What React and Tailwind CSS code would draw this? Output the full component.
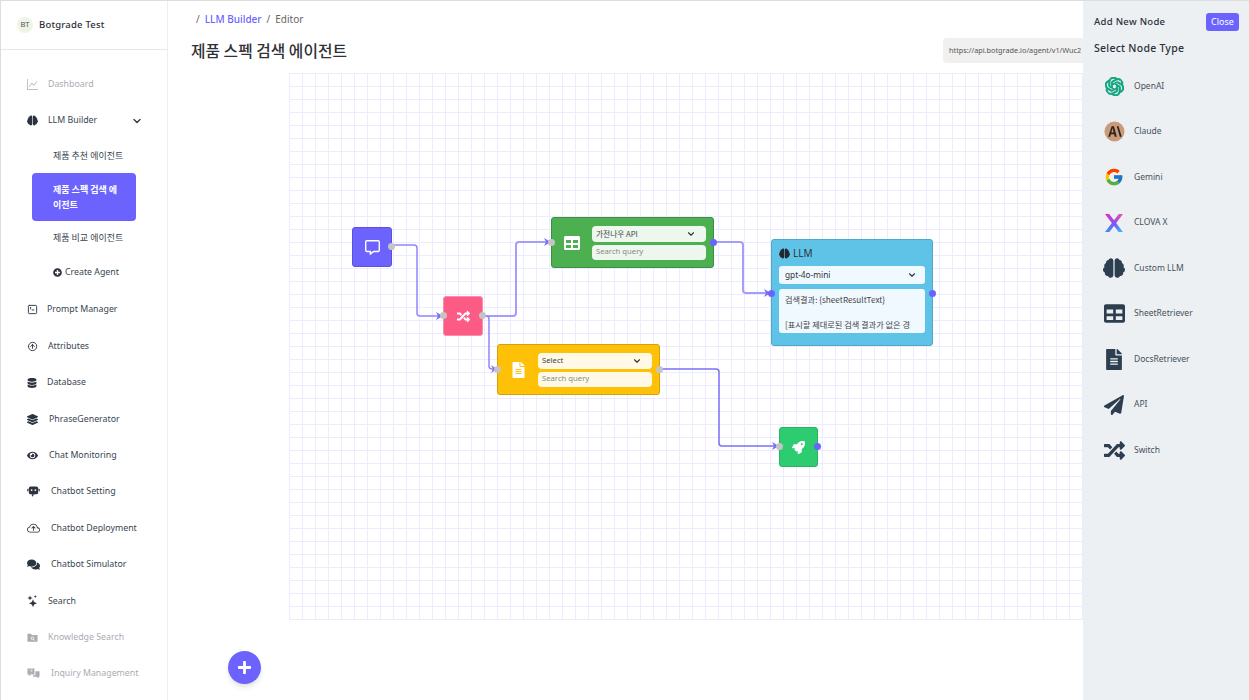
import React from 'react';
import {
  FaBrain, FaTable, FaFileAlt, FaPaperPlane, FaRandom, FaRocket, FaDatabase, FaLayerGroup,
  FaComments, FaPlusCircle, FaPlus, FaEye, FaRegCommentAlt,
} from 'react-icons/fa';
import { SiOpenai } from 'react-icons/si';
import { FcGoogle } from 'react-icons/fc';
import { LuChevronDown, LuSquareTerminal } from 'react-icons/lu';
import { BsGraphUp, BsStars, BsCloudArrowUp } from 'react-icons/bs';
import { TbCircleArrowUp } from 'react-icons/tb';

const sans = "font-['Noto_Sans','Noto_Sans_CJK_KR',sans-serif]";
const kr = "font-['Noto_Sans_CJK_KR','Noto_Sans',sans-serif]";

const ClaudeIcon = () => (
  <svg viewBox="0 0 22 22" className="w-[21px] h-[21px]">
    <circle cx="11" cy="11" r="10.5" fill="#c99b78" />
    <path d="M8 5.5h2.4l3 11h-2.2l-.6-2.6H7.2l-.7 2.6H4.4zM7.7 12h2.4l-1.2-4.6zM13.4 5.5h1.8l3.4 11h-2z" fill="#2b2320" />
  </svg>
);

const ClovaIcon = () => (
  <svg viewBox="0 0 20 20" className="w-[20px] h-[20px]">
    <defs>
      <linearGradient id="cx1" x1="0" y1="0" x2="1" y2="1">
        <stop offset="0" stopColor="#f020c8" />
        <stop offset="0.55" stopColor="#7a5cf0" />
        <stop offset="1" stopColor="#28c8f8" />
      </linearGradient>
      <linearGradient id="cx2" x1="1" y1="0" x2="0" y2="1">
        <stop offset="0" stopColor="#f050a8" />
        <stop offset="0.5" stopColor="#8a50f0" />
        <stop offset="1" stopColor="#2a9cf8" />
      </linearGradient>
    </defs>
    <path d="M1 1h4.2L19 19h-4.4z" fill="url(#cx1)" />
    <path d="M19 1h-4.2L1 19h4.4z" fill="url(#cx2)" />
  </svg>
);

const BotIcon = ({ className }) => (
  <svg viewBox="0 0 14 14" className={className} fill="currentColor">
    <rect x="2" y="1.5" width="10" height="8.5" rx="2" />
    <rect x="0.3" y="4" width="1.2" height="3" rx="0.5" />
    <rect x="12.5" y="4" width="1.2" height="3" rx="0.5" />
    <path d="M5 10h3l-2.4 2.6z" />
    <circle cx="5" cy="5.5" r="1" fill="#fff" />
    <circle cx="9" cy="5.5" r="1" fill="#fff" />
  </svg>
);

const FolderSearchIcon = ({ className }) => (
  <svg viewBox="0 0 12 12" className={className} fill="currentColor">
    <path d="M0.5 2h3.8l1 1.2h6.2v7.3h-11z" />
    <circle cx="6" cy="6.8" r="1.5" fill="none" stroke="#fff" strokeWidth="0.9" />
    <path d="M7 7.8l1.3 1.2" stroke="#fff" strokeWidth="0.9" />
  </svg>
);

const InquiryIcon = ({ className }) => (
  <svg viewBox="0 0 14 14" className={className} fill="currentColor">
    <path d="M0.5 1.5h7.5v6.5H4L2 10V8H0.5z" />
    <path d="M9 4.5h4.5v6H12.4v2l-2-2H6.5V9H9z" />
    <path d="M3.2 3.8c.2-1 2.3-1 2.3.2 0 .8-1.1.8-1.1 1.5" fill="none" stroke="#fff" strokeWidth="0.8" />
    <circle cx="4.4" cy="6.8" r="0.45" fill="#fff" />
  </svg>
);

const navItems = [
  { label: 'Dashboard', icon: BsGraphUp, iconClass: 'w-[11px] h-[11px]', gap: 'gap-[10px]', muted: true },
  { label: 'LLM Builder', icon: FaBrain, iconClass: 'w-[11px] h-[11px]', gap: 'gap-[10px]', chevron: true },
  { sub: '제품 추천 에이전트', h: 'h-[34px]' },
  { active: '제품 스펙 검색 에이전트' },
  { sub: '제품 비교 에이전트', h: 'h-[33px]' },
  { create: 'Create Agent' },
  { label: 'Prompt Manager', icon: LuSquareTerminal, iconClass: 'w-[11px] h-[11px]', gap: 'gap-[9px]' },
  { label: 'Attributes', icon: TbCircleArrowUp, iconClass: 'w-[11px] h-[11px]', gap: 'gap-[10px]' },
  { label: 'Database', icon: FaDatabase, iconClass: 'w-[10px] h-[10px]', gap: 'gap-[10px]' },
  { label: 'PhraseGenerator', icon: FaLayerGroup, iconClass: 'w-[11px] h-[11px]', gap: 'gap-[11px]' },
  { label: 'Chat Monitoring', icon: FaEye, iconClass: 'w-[11px] h-[11px]', gap: 'gap-[11px]' },
  { label: 'Chatbot Setting', icon: BotIcon, iconClass: 'w-[13px] h-[13px]', gap: 'gap-[11px]' },
  { label: 'Chatbot Deployment', icon: BsCloudArrowUp, iconClass: 'w-[13px] h-[13px]', gap: 'gap-[11px]' },
  { label: 'Chatbot Simulator', icon: FaComments, iconClass: 'w-[13px] h-[13px]', gap: 'gap-[11px]' },
  { label: 'Search', icon: BsStars, iconClass: 'w-[12px] h-[12px]', gap: 'gap-[9px]' },
  { label: 'Knowledge Search', icon: FolderSearchIcon, iconClass: 'w-[11px] h-[11px]', gap: 'gap-[10px]', muted: true },
  { label: 'Inquiry Management', icon: InquiryIcon, iconClass: 'w-[13px] h-[13px]', gap: 'gap-[11px]', muted: true },
];

const nodeTypes = [
  { label: 'OpenAI', icon: <SiOpenai stroke="currentColor" strokeWidth={1.2} className="w-[19px] h-[19px] text-[#10a37f]" /> },
  { label: 'Claude', icon: <ClaudeIcon /> },
  { label: 'Gemini', icon: <FcGoogle className="w-[20px] h-[20px]" /> },
  { label: 'CLOVA X', icon: <ClovaIcon /> },
  { label: 'Custom LLM', icon: <FaBrain className="w-[22px] h-[22px] text-[#2c3e50]" /> },
  { label: 'SheetRetriever', icon: <FaTable className="w-[21px] h-[21px] text-[#2c3e50]" /> },
  { label: 'DocsRetriever', icon: <FaFileAlt className="w-[20px] h-[21px] text-[#2c3e50]" /> },
  { label: 'API', icon: <FaPaperPlane className="w-[20px] h-[20px] text-[#2c3e50]" /> },
  { label: 'Switch', icon: <FaRandom className="w-[21px] h-[21px] text-[#2c3e50]" /> },
];

const Sidebar = () => (
  <aside className={`w-[167px] shrink-0 h-full border-r border-[#eeeeee] bg-white ${sans}`}>
    <div className="h-[49px] border-b border-[#e8e8e8] flex items-center pl-[16px] gap-[6px]">
      <div className="w-[16px] h-[16px] rounded-full bg-[#eef4e6] flex items-center justify-center text-[7.5px] text-[#555]">BT</div>
      <span className="text-[9.5px] font-medium text-[#2b2f3a] tracking-[0.2px]">Botgrade Test</span>
    </div>
    <nav className="pt-[16px] flex flex-col">
      {navItems.map((item, i) => {
        if (item.sub) {
          return (
            <div key={i} className={`${item.h} flex items-center pl-[52px] text-[9px] text-[#384551] ${kr}`}>{item.sub}</div>
          );
        }
        if (item.active) {
          return (
            <div key={i} className="pl-[31px]">
              <div className={`w-[104px] h-[48px] rounded-[4px] bg-[#6c63ff] text-white text-[9px] font-bold leading-[15px] pl-[21px] pr-[14px] flex items-center ${kr}`}>
                {item.active}
              </div>
            </div>
          );
        }
        if (item.create) {
          return (
            <div key={i} className="h-[38px] flex items-center pl-[52px] gap-[3px] text-[8.8px] text-[#384551]">
              <FaPlusCircle className="w-[9px] h-[9px] text-[#2c3340]" />
              {item.create}
            </div>
          );
        }
        const Icon = item.icon;
        return (
          <div
            key={i}
            className={`h-[36.4px] flex items-center pl-[26px] pr-[24px] ${item.gap} text-[8.8px] ${item.muted ? 'text-[#a9acb3]' : 'text-[#384551]'}`}
          >
            <Icon className={`${item.iconClass} shrink-0 ${item.muted ? 'text-[#a9acb3]' : 'text-[#2c3340]'}`} />
            <span className="whitespace-nowrap">{item.label}</span>
            {item.chevron && <LuChevronDown strokeWidth={2.6} className="ml-auto w-[12px] h-[12px] text-[#333]" />}
          </div>
        );
      })}
    </nav>
  </aside>
);

const Handle = ({ className }) => (
  <span className={`absolute w-[7px] h-[7px] rounded-full ${className}`} />
);

const Field = ({ children, select, className = '' }) => (
  <div className={`flex items-center justify-between rounded-[4px] bg-white/90 px-[4px] text-[7.7px] ${select ? 'text-[#444]' : 'text-[#8a8a8a]'} ${className}`}>
    <span>{children}</span>
    {select && <LuChevronDown strokeWidth={2.6} className="w-[10px] h-[10px] mr-[6px] text-[#333]" />}
  </div>
);

const Canvas = () => (
  <div className={`relative ml-[121px] h-[547px] w-[900px] bg-[linear-gradient(#eeebff_1px,transparent_1px),linear-gradient(90deg,#eeebff_1px,transparent_1px)] bg-[size:13px_13px] border-b border-[#eeebff] ${sans}`}>
    <svg className="absolute inset-0 w-full h-full" fill="none">
      <g stroke="#8f86ff" strokeWidth="1.5">
        <path d="M103 172 H125 Q128 172 128 175 V240 Q128 243 131 243 H154" />
        <path d="M193 243 H224 Q227 243 227 240 V172 Q227 169 230 169 H262" stroke="#a49cff" strokeWidth="2" />
        <path d="M193 243 H197 Q200 243 200 246 V293 Q200 296 203 296 H208" />
        <path d="M425 169 H451 Q454 169 454 172 V217 Q454 220 457 220 H482" stroke="#a49cff" strokeWidth="2" />
        <path d="M371 296 H427 Q430 296 430 299 V370 Q430 373 433 373 H490" stroke="#7b70f5" />
      </g>
      <g fill="#7b70f5">
        <path d="M147 239 L154 243 L147 247 L149 243 Z" />
        <path d="M255 165 L262 169 L255 173 L257 169 Z" />
        <path d="M202 292 L208 296 L202 300 L204 296 Z" />
        <path d="M475 216 L482 220 L475 224 L477 220 Z" />
        <path d="M483 369 L490 373 L483 377 L485 373 Z" />
      </g>
    </svg>

    {/* chat node */}
    <div className="absolute left-[63px] top-[154px] w-[40px] h-[40px] rounded-[3px] bg-[#6c63ff] border border-[#5a52d8] flex items-center justify-center">
      <FaRegCommentAlt className="w-[15px] h-[15px] text-white" />
      <Handle className="-right-[4px] top-[15px] bg-[#c4c4c4]" />
    </div>

    {/* switch node */}
    <div className="absolute left-[154px] top-[223px] w-[40px] h-[40px] rounded-[3px] bg-[#fb5b85] border border-[#f78fa9] flex items-center justify-center">
      <FaRandom className="w-[13px] h-[13px] text-white" />
      <Handle className="-left-[4px] top-[15px] bg-[#c4c4c4]" />
      <Handle className="-right-[4px] top-[15px] bg-[#c4c4c4]" />
    </div>

    {/* sheet node */}
    <div className="absolute left-[262px] top-[144px] w-[163px] h-[51px] rounded-[3px] bg-[#4caf50] border border-[#3c8f40] flex items-center pl-[12px] pr-[7px] gap-[12px]">
      <FaTable className="w-[16px] h-[16px] text-white shrink-0" />
      <div className="flex-1 flex flex-col gap-[3px]">
        <Field select className={`h-[16px] ${kr}`}>가전나우 API</Field>
        <Field className="h-[15px]">Search query</Field>
      </div>
      <Handle className="-left-[4px] top-[21px] bg-[#c4c4c4]" />
      <Handle className="-right-[4px] top-[21px] bg-[#6c63ff]" />
    </div>

    {/* docs node */}
    <div className="absolute left-[208px] top-[271px] w-[163px] h-[51px] rounded-[3px] bg-[#ffc107] border border-[#d4a20b] flex items-center pl-[14px] pr-[7px] gap-[13px]">
      <FaFileAlt className="w-[13px] h-[16px] text-white shrink-0" />
      <div className="flex-1 flex flex-col gap-[3px]">
        <Field select className="h-[16px]">Select</Field>
        <Field className="h-[15px]">Search query</Field>
      </div>
      <Handle className="-left-[4px] top-[21px] bg-[#c4c4c4]" />
      <Handle className="-right-[4px] top-[21px] bg-[#c4c4c4]" />
    </div>

    {/* llm node */}
    <div className="absolute left-[482px] top-[166px] w-[162px] h-[107px] rounded-[3px] bg-[#5fc3e8] border border-[#4fa8cc] px-[7px] pt-[6px]">
      <div className="flex items-center gap-[2px] h-[15px] text-[10px] text-[#2b2f3a]">
        <FaBrain className="w-[11px] h-[11px] text-[#22282f]" />
        <span className="ml-[1px]">LLM</span>
      </div>
      <div className="mt-[5px] h-[18px] rounded-[3px] bg-[#f0f9ff] flex items-center justify-between pl-[6px] pr-[8px] text-[8.3px] text-[#333]">
        <span>gpt-4o-mini</span>
        <LuChevronDown strokeWidth={2.6} className="w-[10px] h-[10px]" />
      </div>
      <div className={`mt-[5px] h-[44px] rounded-[3px] bg-[#f0f9ff] overflow-hidden px-[6px] pt-[4px] text-[8.2px] leading-[12.5px] text-[#444] whitespace-nowrap ${kr}`}>
        <div>검색결과: {'{sheetResultText}'}</div>
        <div className="h-[12.5px]" />
        <div>[표시할 제대로된 검색 결과가 없은 경</div>
      </div>
      <Handle className="-left-[4px] top-[50px] bg-[#6c63ff]" />
      <Handle className="-right-[4px] top-[50px] bg-[#6c63ff]" />
    </div>

    {/* deploy node */}
    <div className="absolute left-[490px] top-[354px] w-[39px] h-[40px] rounded-[3px] bg-[#2ecc71] border border-[#28b463] flex items-center justify-center">
      <FaRocket className="w-[13px] h-[13px] text-white" />
      <Handle className="-left-[4px] top-[15px] bg-[#c4c4c4]" />
      <Handle className="-right-[4px] top-[15px] bg-[#6c63ff]" />
    </div>
  </div>
);

const NodePanel = () => (
  <div className={`absolute right-0 top-0 bottom-0 w-[166px] bg-[#edf0f2] ${sans}`}>
    <div className="flex items-center justify-between pl-[11px] pr-[10px] pt-[12px]">
      <span className="text-[9.5px] font-medium text-[#2b2f3a] tracking-[0.3px]">Add New Node</span>
      <button className="w-[33px] h-[18px] rounded-[3px] bg-[#6c63ff] text-white text-[9px]">Close</button>
    </div>
    <div className="pl-[11px] mt-[8px] text-[10.5px] font-medium leading-[18px] text-[#2b2f3a] tracking-[0.25px]">Select Node Type</div>
    <div className="mt-[6.5px] flex flex-col">
      {nodeTypes.map((node) => (
        <div key={node.label} className="h-[45.5px] flex items-center">
          <div className="w-[22px] ml-[20px] flex items-center justify-center">{node.icon}</div>
          <span className="ml-[9px] text-[8.5px] text-[#46505c]">{node.label}</span>
        </div>
      ))}
    </div>
  </div>
);

export default function App() {
  return (
    <div className="relative h-screen w-full overflow-hidden flex bg-white border-t border-l border-[#dddddd]">
      <Sidebar />
      <main className="flex-1 min-w-0 relative">
        <div className={`pt-[11px] pl-[28px] flex items-center gap-[5px] h-[26px] text-[10px] text-[#666] ${sans}`}>
          <span>/</span>
          <span className="text-[#6c63ff] font-medium">LLM Builder</span>
          <span>/</span>
          <span>Editor</span>
        </div>
        <div className="flex items-center justify-between h-[46px] pl-[23px] pr-[166px]">
          <h1 className={`pt-[2px] text-[15.8px] font-medium text-[#2f3136] ${kr}`}>제품 스펙 검색 에이전트</h1>
          <div className={`w-[140px] shrink-0 h-[25px] rounded-l-[4px] bg-[#f0f0f0] flex items-center pl-[6px] text-[7.3px] text-[#555] whitespace-nowrap overflow-hidden ${sans}`}>
            https://api.botgrade.io/agent/v1/Wuc2
          </div>
        </div>
        <Canvas />
      </main>
      <NodePanel />
      <button className="absolute left-[227px] top-[650px] w-[33px] h-[33px] rounded-full bg-[#6c63ff] shadow-md flex items-center justify-center">
        <FaPlus className="w-[15px] h-[15px] text-white" />
      </button>
    </div>
  );
}
